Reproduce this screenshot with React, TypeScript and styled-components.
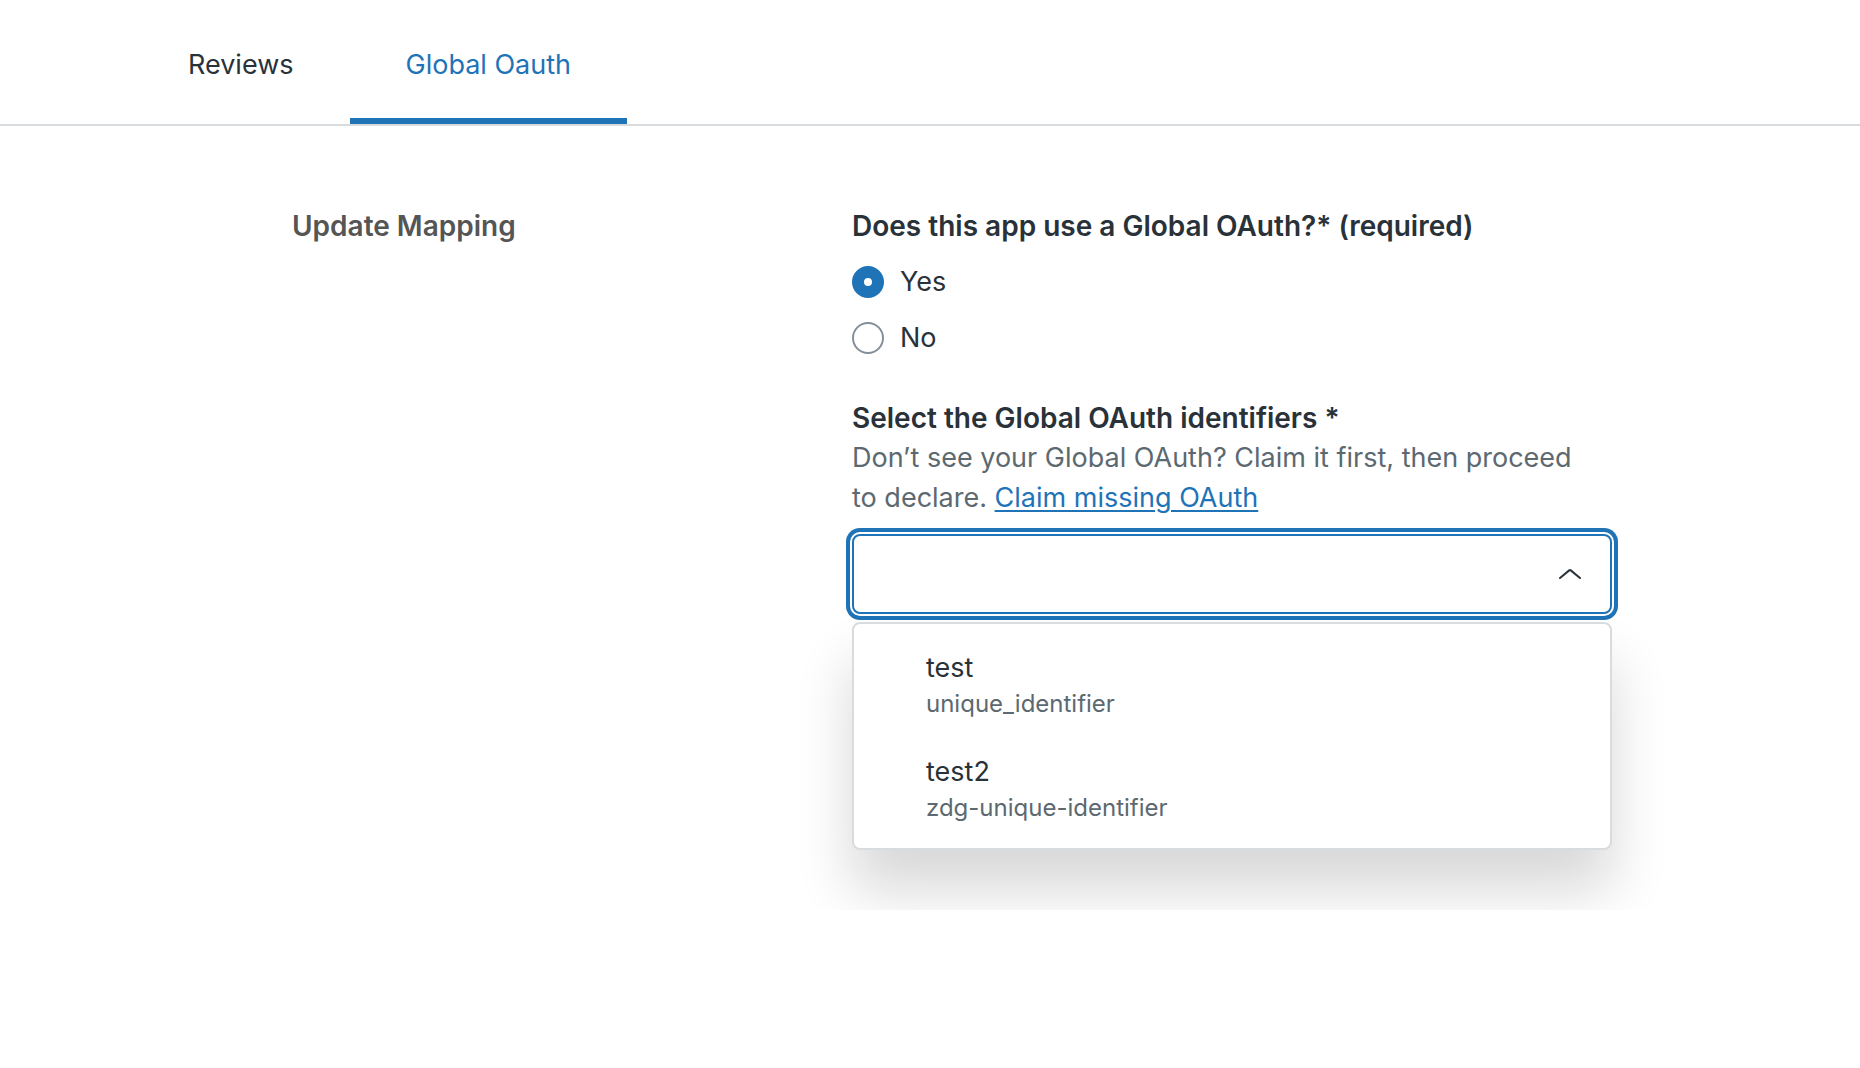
import React, { useState } from "react";
import styled, { createGlobalStyle } from "styled-components";

const color = {
  blue: "#1f73b7",
  text: "#293239",
  hint: "#5c6970",
  title: "#555555",
  line: "#d8dcde",
  control: "#848f99",
};

const GlobalStyle = createGlobalStyle`
  *, *::before, *::after { box-sizing: border-box; }
  body {
    margin: 0;
    background: #fff;
    color: ${color.text};
    font-family: Inter, "Liberation Sans", sans-serif;
    font-size: 27px;
    line-height: 40px;
  }
`;

const TabBar = styled.nav`
  display: flex;
  height: 126px;
  padding-left: 132px;
  border-bottom: 2px solid ${color.line};
`;

const Tab = styled.button<{ $active: boolean }>`
  padding: 12px 56px 0;
  border: 0;
  border-bottom: 6px solid ${(p) => (p.$active ? color.blue : "transparent")};
  background: none;
  color: ${(p) => (p.$active ? color.blue : color.text)};
  font: inherit;
  cursor: pointer;
`;

const Section = styled.section`
  display: grid;
  grid-template-columns: 560px minmax(0, 760px);
  padding: 80px 40px 60px 292px;
  overflow: hidden;
`;

const SectionTitle = styled.h2`
  margin: 0;
  color: ${color.title};
  font-size: 28px;
  font-weight: 600;
`;

const Form = styled.form`
  display: flex;
  flex-direction: column;
  gap: 40px;
`;

const RadioGroup = styled.fieldset`
  display: flex;
  flex-direction: column;
  gap: 16px;
  margin: 0;
  padding: 0;
  border: 0;
`;

const Legend = styled.legend`
  margin-bottom: 16px;
  padding: 0;
  font-size: 28px;
  font-weight: 600;
`;

const RadioLabel = styled.label`
  display: flex;
  align-items: center;
  gap: 16px;
`;

const Radio = styled.input`
  appearance: none;
  width: 32px;
  height: 32px;
  margin: 0;
  border: 2px solid ${color.control};
  border-radius: 50%;
  background: #fff;

  &:checked {
    border: 12px solid ${color.blue};
  }
`;

const Field = styled.div`
  display: flex;
  flex-direction: column;
`;

const FieldLabel = styled.label`
  font-size: 28px;
  font-weight: 600;
`;

const Hint = styled.p`
  margin: 0;
  padding-right: 24px;
  color: ${color.hint};
`;

const Link = styled.a`
  color: ${color.blue};
  text-decoration-thickness: 2px;
  text-underline-offset: 3px;
`;

const SelectBox = styled.div`
  display: grid;
  align-items: center;
  margin-top: 16px;

  > * {
    grid-area: 1 / 1;
  }
`;

const Select = styled.select<{ $open: boolean }>`
  appearance: none;
  width: 100%;
  height: 80px;
  padding: 0 80px 0 24px;
  border: 2px solid ${(p) => (p.$open ? color.blue : color.line)};
  border-radius: 8px;
  outline: 0;
  background: #fff;
  color: inherit;
  font: inherit;
  box-shadow: ${(p) => (p.$open ? `0 0 0 2px #fff, 0 0 0 6px ${color.blue}` : "none")};
`;

const Chevron = styled.svg<{ $open: boolean }>`
  justify-self: end;
  width: 32px;
  height: 32px;
  margin-right: 26px;
  pointer-events: none;
  transform: ${(p) => (p.$open ? "none" : "rotate(180deg)")};
`;

const Menu = styled.ul`
  margin: 8px 0 0;
  padding: 8px 0;
  border: 2px solid ${color.line};
  border-radius: 8px;
  background: #fff;
  box-shadow: 0 40px 56px rgba(10, 13, 14, 0.16);
  list-style: none;
`;

const Option = styled.li`
  display: flex;
  flex-direction: column;
  padding: 16px 72px;
  cursor: pointer;
`;

const OptionMeta = styled.span`
  color: ${color.hint};
  font-size: 24px;
  line-height: 32px;
`;

const tabs = ["Reviews", "Global Oauth"];
const answers = ["Yes", "No"];
const identifiers = [
  { name: "test", id: "unique_identifier" },
  { name: "test2", id: "zdg-unique-identifier" },
];

export default function App() {
  const [tab, setTab] = useState("Global Oauth");
  const [answer, setAnswer] = useState("Yes");
  const [open, setOpen] = useState(true);
  const [selected, setSelected] = useState("");

  return (
    <>
      <GlobalStyle />
      <TabBar>
        {tabs.map((name) => (
          <Tab key={name} type="button" $active={name === tab} onClick={() => setTab(name)}>
            {name}
          </Tab>
        ))}
      </TabBar>
      <Section>
        <SectionTitle>Update Mapping</SectionTitle>
        <Form>
          <RadioGroup>
            <Legend>Does this app use a Global OAuth?* (required)</Legend>
            {answers.map((name) => (
              <RadioLabel key={name}>
                <Radio
                  type="radio"
                  name="uses-oauth"
                  checked={answer === name}
                  onChange={() => setAnswer(name)}
                />
                {name}
              </RadioLabel>
            ))}
          </RadioGroup>
          <Field>
            <FieldLabel htmlFor="identifiers">Select the Global OAuth identifiers *</FieldLabel>
            <Hint>
              Don’t see your Global OAuth? Claim it first, then proceed to declare.{" "}
              <Link href="#claim">Claim missing OAuth</Link>
            </Hint>
            <SelectBox>
              <Select
                id="identifiers"
                $open={open}
                value={selected}
                onMouseDown={(e) => {
                  e.preventDefault();
                  setOpen(!open);
                }}
                onChange={(e) => setSelected(e.target.value)}
              >
                <option value="" />
                {identifiers.map((item) => (
                  <option key={item.id} value={item.id}>
                    {item.name}
                  </option>
                ))}
              </Select>
              <Chevron $open={open} viewBox="0 0 32 32" fill="none" aria-hidden="true">
                <path
                  d="M6 20 L15.2 12.4 Q16 11.8 16.8 12.4 L26 20"
                  stroke={color.text}
                  strokeWidth="2"
                  strokeLinecap="round"
                />
              </Chevron>
            </SelectBox>
            {open && (
              <Menu role="listbox" aria-label="Global OAuth identifiers">
                {identifiers.map((item) => (
                  <Option
                    key={item.id}
                    role="option"
                    aria-selected={item.id === selected}
                    onClick={() => {
                      setSelected(item.id);
                      setOpen(false);
                    }}
                  >
                    {item.name}
                    <OptionMeta>{item.id}</OptionMeta>
                  </Option>
                ))}
              </Menu>
            )}
          </Field>
        </Form>
      </Section>
    </>
  );
}
